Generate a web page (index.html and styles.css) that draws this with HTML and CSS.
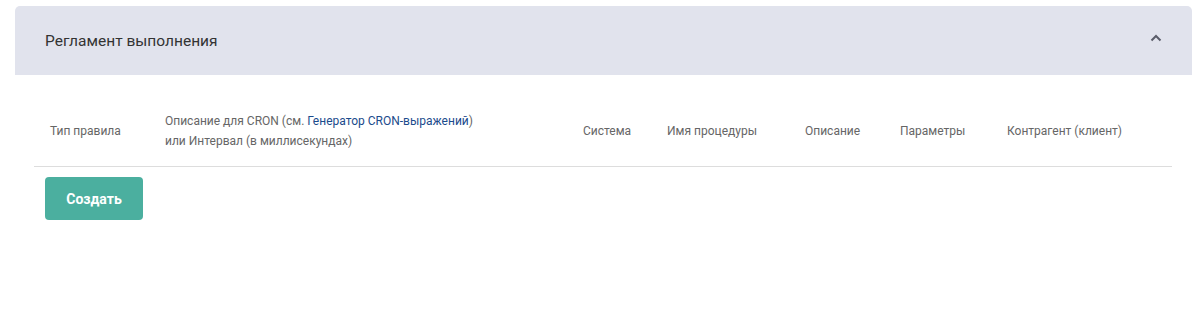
FILE: index.html
```html
<!DOCTYPE html>
<html lang="ru">
<head>
<meta charset="utf-8">
<title>Регламент выполнения</title>
<link rel="stylesheet" href="styles.css">
</head>
<body>
<div class="page">
  <section class="panel">
    <header class="panel-head">
      <h2 class="panel-title">Регламент выполнения</h2>
      <svg class="chevron" width="12" height="8" viewBox="0 0 12 8"><path d="M1.5 6.5 L6 2 L10.5 6.5" fill="none" stroke="#5a5d6a" stroke-width="2"/></svg>
    </header>
    <div class="panel-body">
      <table class="grid">
        <thead>
          <tr>
            <th class="c1">Тип правила</th>
            <th class="c2">Описание для CRON (см. <a href="#">Генератор CRON-выражений</a>)<br>или Интервал (в миллисекундах)</th>
            <th class="c3">Система</th>
            <th class="c4">Имя процедуры</th>
            <th class="c5">Описание</th>
            <th class="c6">Параметры</th>
            <th class="c7">Контрагент (клиент)</th>
          </tr>
        </thead>
      </table>
      <button class="btn">Создать</button>
    </div>
  </section>
</div>
</body>
</html>
```
FILE: styles.css
```css
html, body {
  margin: 0;
  padding: 0;
  background: #ffffff;
  font-family: Roboto, "Noto Sans", sans-serif;
}
.page {
  padding: 6px 10px 0 15px;
}
.panel {
  width: 1177px;
}
.panel-head {
  height: 69px;
  background: #e1e3ed;
  border-radius: 5px 5px 0 0;
  display: flex;
  align-items: center;
  justify-content: space-between;
  padding: 0 30px;
  box-sizing: border-box;
}
.panel-title {
  margin: 0;
  font-size: 15.5px;
  font-weight: 400;
  color: #333333;
}
.chevron {
  margin-top: -6px;
}
.panel-body {
  padding: 21px 20px 0 19px;
}
.grid {
  border-collapse: collapse;
  table-layout: fixed;
  width: 1138px;
}
.grid th {
  box-sizing: border-box;
  text-align: left;
  font-weight: 400;
  font-size: 12px;
  line-height: 20px;
  color: #666666;
  padding: 15px 0 15px 16px;
  border-bottom: 1px solid #dddddd;
  vertical-align: middle;
  white-space: nowrap;
}
.grid a {
  color: #1b4b8c;
  text-decoration: none;
}
.c1 { width: 115px; }
.c2 { width: 418px; }
.c3 { width: 84px; }
.c4 { width: 138px; }
.c5 { width: 95px; }
.c6 { width: 107px; }
.c7 { width: 181px; }
.btn {
  display: block;
  margin: 10px 0 0 11px;
  width: 98px;
  height: 43px;
  background: #4baf9f;
  border: none;
  border-radius: 4px;
  color: #ffffff;
  font-family: Roboto, "Noto Sans", sans-serif;
  font-size: 14px;
  font-weight: 700;
}
```
